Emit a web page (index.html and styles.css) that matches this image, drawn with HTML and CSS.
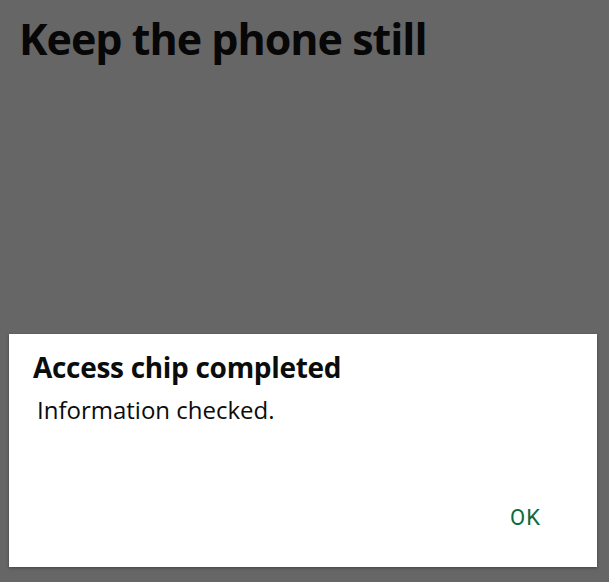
FILE: index.html
```html
<!DOCTYPE html>
<html lang="en">
<head>
<meta charset="utf-8">
<title>Keep the phone still</title>
<link rel="stylesheet" href="styles.css">
</head>
<body>
<main class="screen">
  <h1 class="screen-title">Keep the phone still</h1>
</main>
<div class="dialog" role="dialog" aria-labelledby="dlg-title">
  <h2 class="dialog-title" id="dlg-title">Access chip completed</h2>
  <p class="dialog-message">Information checked.</p>
  <div class="dialog-actions">
    <button class="dialog-button" type="button">OK</button>
  </div>
</div>
</body>
</html>
```
FILE: styles.css
```css
html, body {
  margin: 0;
  padding: 0;
}
body {
  width: 609px;
  height: 582px;
  background: #666666;
  font-family: "Open Sans", "Noto Sans", sans-serif;
  overflow: hidden;
  position: relative;
}
.screen {
  padding: 9px 20px 0 19px;
}
.screen-title {
  margin: 0;
  font-size: 43px;
  font-weight: 700;
  line-height: 60px;
  color: #070707;
  letter-spacing: -1px;
}
.dialog {
  position: absolute;
  left: 9px;
  top: 334px;
  width: 588px;
  height: 233px;
  background: #ffffff;
  box-shadow: 0 1px 3px rgba(0,0,0,0.35);
  display: flex;
  flex-direction: column;
  box-sizing: border-box;
  padding: 14px 24px 0 24px;
}
.dialog-title {
  margin: 0;
  font-size: 28px;
  font-weight: 700;
  line-height: 38px;
  color: #0b0c0c;
  letter-spacing: -0.3px;
}
.dialog-message {
  margin: 8px 0 0 4px;
  font-size: 24px;
  line-height: 32px;
  color: #0b0c0c;
}
.dialog-actions {
  margin-top: auto;
  display: flex;
  justify-content: flex-end;
  padding: 0 32px 36px 0;
}
.dialog-button {
  border: 0;
  background: none;
  padding: 0;
  font-family: Roboto, "Noto Sans", sans-serif;
  font-size: 22px;
  letter-spacing: 1px;
  color: #0b6b3d;
  line-height: 26px;
}
```
